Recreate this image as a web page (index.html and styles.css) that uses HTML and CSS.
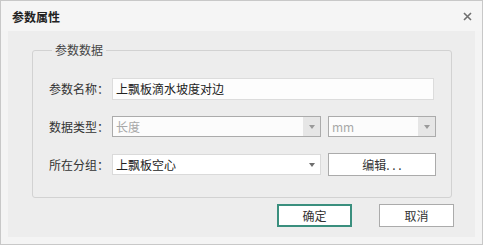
FILE: index.html
```html
<!DOCTYPE html>
<html lang="zh-CN">
<head>
    <meta charset="UTF-8">
    <title>参数属性</title>
    <link rel="stylesheet" href="styles.css">
</head>
<body>

<div class="dialog">
    <div class="titlebar">
        <span class="title">参数属性</span>
        <svg class="close" width="9" height="9" viewBox="0 0 9 9">
            <path d="M1 1 L8 8 M8 1 L1 8" stroke="#6f6f6f" stroke-width="1.6" fill="none"/>
        </svg>
    </div>

    <div class="content">
        <fieldset class="group">
            <legend>参数数据</legend>

            <div class="row row-name">
                <label>参数名称：</label>
                <div class="textbox">上飘板滴水坡度对边</div>
            </div>

            <div class="row row-type">
                <label>数据类型：</label>
                <div class="select select-wide disabled">
                    <span class="value">长度</span>
                    <span class="arrow"></span>
                </div>
                <div class="select select-unit disabled">
                    <span class="value">mm</span>
                    <span class="arrow"></span>
                </div>
            </div>

            <div class="row row-group">
                <label>所在分组：</label>
                <div class="select select-wide">
                    <span class="value">上飘板空心</span>
                    <span class="arrow"></span>
                </div>
                <button class="btn btn-edit" type="button">编辑. . .</button>
            </div>
        </fieldset>

        <div class="actions">
            <button class="btn btn-ok" type="button">确定</button>
            <button class="btn btn-cancel" type="button">取消</button>
        </div>
    </div>
</div>

</body>
</html>
```

FILE: styles.css
```css
body {
    margin: 0;
    padding: 0;
    font-family: "Noto Sans CJK SC", "Microsoft YaHei", sans-serif;
    font-size: 12px;
    color: #333;
}

.dialog {
    width: 483px;
    height: 245px;
    box-sizing: border-box;
    border: 1px solid #c8c8c8;
    background-color: #f4f4f4;
}

.titlebar {
    height: 30px;
    display: flex;
    align-items: center;
    justify-content: space-between;
    padding: 0 10px 0 11px;
    background-color: #f5f5f5;
}
.title {
    font-size: 12px;
    font-weight: bold;
    color: #222;
}

.content {
    margin: 0 7px;
    height: 206px;
    box-sizing: border-box;
    background-color: #ededed;
    padding: 11px 21px 0 24px;
}

.group {
    margin: 0;
    width: 420px;
    height: 156px;
    box-sizing: border-box;
    border: 1px solid #d2d2d2;
    border-radius: 3px;
    padding: 19px 0 0 16px;
}
.group legend {
    margin-left: 3px;
    padding: 0 3px;
    line-height: 16px;
    color: #444;
}

.row {
    display: flex;
    align-items: center;
    height: 23px;
}
.row-type {
    margin-top: 15px;
}
.row-group {
    margin-top: 15px;
}
.row label {
    width: 63px;
    line-height: 16px;
}

.textbox {
    width: 322px;
    height: 22px;
    box-sizing: border-box;
    border: 1px solid #dcdcdc;
    background-color: #fdfdfd;
    padding: 0 3px;
    line-height: 20px;
    color: #222;
}

.select {
    height: 21px;
    box-sizing: border-box;
    border: 1px solid #dadada;
    background-color: #fff;
    display: flex;
    align-items: stretch;
    justify-content: space-between;
}
.select .value {
    padding-left: 3px;
    line-height: 19px;
    color: #222;
}
.select .arrow {
    width: 17px;
    display: flex;
    align-items: center;
    justify-content: center;
}
.select .arrow::after {
    content: "";
    border-left: 3px solid transparent;
    border-right: 3px solid transparent;
    border-top: 4px solid #6e6e6e;
}
.select-wide {
    width: 209px;
}
.select-unit {
    width: 108px;
    margin-left: 7px;
}
.select.disabled {
    border-color: #ababab;
    background-color: #fcfcfc;
}
.select.disabled .value {
    color: #a8a8a8;
}
.select.disabled .arrow {
    background-color: #e6e6e6;
}
.select.disabled .arrow::after {
    border-top-color: #9a9a9a;
}

.btn {
    font-family: inherit;
    font-size: 12px;
    color: #333;
    background-color: #fff;
    border: 1px solid #ababab;
    padding: 0;
    cursor: pointer;
}
.btn-edit {
    width: 108px;
    height: 23px;
    margin-left: 7px;
}

.actions {
    display: flex;
    justify-content: flex-end;
    gap: 27px;
    margin-top: 6px;
}
.actions .btn {
    width: 75px;
    height: 23px;
}
.btn-ok {
    border: 2px solid #3a8f7e;
}
```
